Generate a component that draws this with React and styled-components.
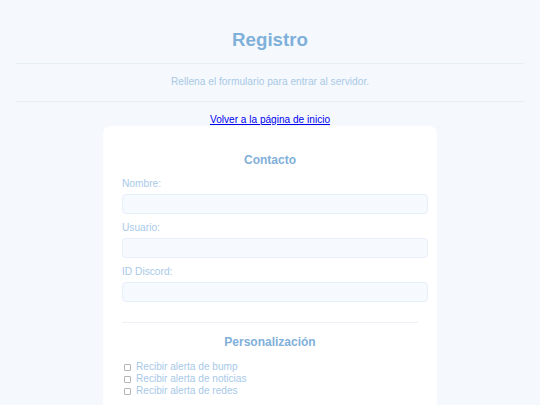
import React from 'react';
import styled, { createGlobalStyle } from 'styled-components';

const GlobalStyle = createGlobalStyle`
    html, body {
        margin: 0;
        padding: 0;
        background: #f5f9fd;
        font-family: "Liberation Sans", Arial, sans-serif;
    }
`;

const Page = styled.div`
    min-height: 405px;
    overflow: hidden;
`;

const Header = styled.header`
    padding-top: 29px;
    text-align: center;
`;

const Title = styled.h1`
    margin: 0 0 12px;
    font-size: 18.7px;
    line-height: 22px;
    font-weight: bold;
    color: #7fb0da;
`;

const Rule = styled.div`
    margin: 0 16px;
    border-top: 1px solid #e6eef6;
`;

const Subtitle = styled.p`
    margin: 0;
    padding: 12px 0 13px;
    font-size: 10.2px;
    line-height: 12px;
    color: #a9c8e5;
`;

const BackLink = styled.a`
    display: block;
    width: max-content;
    margin: 12px auto 0;
    font-size: 10.1px;
    line-height: 12px;
    color: #0000ee;
    text-decoration: underline;
`;

const Card = styled.form`
    box-sizing: border-box;
    width: 334px;
    margin: 0 auto;
    padding: 27px 19px 30px;
    background: #ffffff;
    border-radius: 8px;
`;

const Section = styled.h2`
    margin: 0;
    text-align: center;
    font-size: 12px;
    line-height: 14px;
    font-weight: bold;
    color: #7fb0da;
`;

const Field = styled.div`
    margin-top: ${props => (props.first ? '11px' : '8px')};
`;

const Label = styled.label`
    display: block;
    font-size: 10.2px;
    line-height: 12px;
    color: #a8c9e8;
`;

const Input = styled.input`
    display: block;
    box-sizing: content-box;
    width: 100%;
    height: 18px;
    margin: 4px 0 0;
    padding: 0 4px;
    border: 1px solid #e7eff8;
    border-radius: 4px;
    background: #f6faff;
    outline: none;
`;

const Divider = styled.div`
    margin: 20px 0 12px;
    border-top: 1px solid #eef2f7;
`;

const Options = styled.div`
    margin-top: 12px;
`;

const Option = styled.label`
    display: flex;
    align-items: center;
    font-size: 10.1px;
    line-height: 12px;
    color: #a8c9e8;
`;

const Box = styled.input.attrs({ type: 'checkbox' })`
    appearance: none;
    box-sizing: border-box;
    width: 7px;
    height: 7px;
    margin: 0 5px 0 2px;
    border: 1px solid #b4b4b4;
    border-radius: 1px;
    background: #ffffff;
`;

const fields = ['Nombre:', 'Usuario:', 'ID Discord:'];
const alerts = ['Recibir alerta de bump', 'Recibir alerta de noticias', 'Recibir alerta de redes'];

const App = () => {
    return (
        <Page>
            <GlobalStyle />
            <Header>
                <Title>Registro</Title>
                <Rule />
                <Subtitle>Rellena el formulario para entrar al servidor.</Subtitle>
                <Rule />
            </Header>
            <BackLink href="#">Volver a la página de inicio</BackLink>
            <Card onSubmit={e => e.preventDefault()}>
                <Section>Contacto</Section>
                {fields.map((f, i) => (
                    <Field key={f} first={i === 0}>
                        <Label>{f}</Label>
                        <Input type="text" />
                    </Field>
                ))}
                <Divider />
                <Section>Personalización</Section>
                <Options>
                    {alerts.map(a => (
                        <Option key={a}>
                            <Box />
                            {a}
                        </Option>
                    ))}
                </Options>
            </Card>
        </Page>
    );
};

export default App;
